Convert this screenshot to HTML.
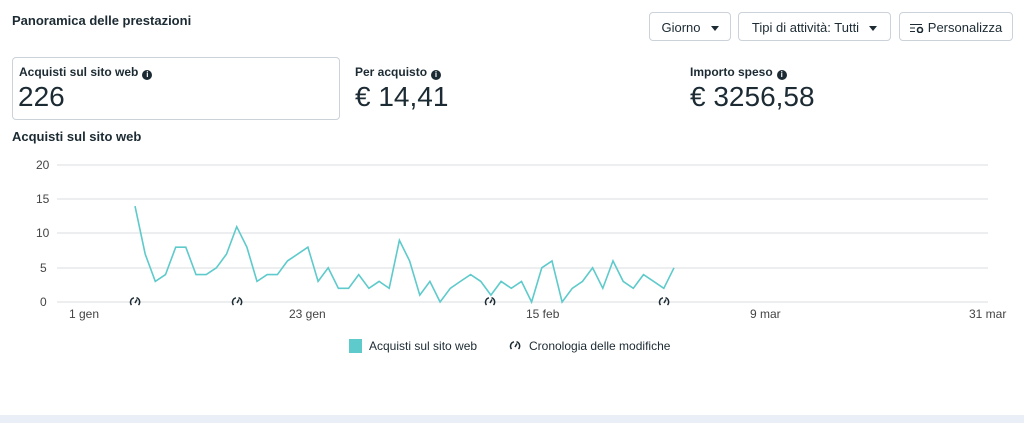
<!DOCTYPE html>
<html><head><meta charset="utf-8"><style>
body{margin:0;width:1024px;height:423px;background:#fff;font-family:"Liberation Sans",sans-serif;color:#1c2b33;position:relative;overflow:hidden}
.a{position:absolute}
.btn{position:absolute;top:12px;height:29px;border:1px solid #cbd2d9;border-radius:4px;font-size:13px;line-height:29px;box-sizing:border-box;text-align:center;background:#fff}
.tri{display:inline-block;width:0;height:0;border-left:4px solid transparent;border-right:4px solid transparent;border-top:5px solid #1c2b33;vertical-align:middle;margin-left:10px}
.lab{font-size:12px;font-weight:bold}
.val{font-size:28px}
.i{display:inline-block;width:10px;height:10px;border-radius:50%;background:#1c2b33;color:#fff;font-size:8px;line-height:10px;text-align:center;font-weight:bold;vertical-align:-1px;margin-left:4px}
.ax{font-size:12px;color:#444;position:absolute}
</style></head><body>
<div class="a" style="left:12px;top:13px;font-size:13px;font-weight:bold">Panoramica delle prestazioni</div>
<div class="btn" style="left:649px;width:82px">Giorno<span class="tri"></span></div>
<div class="btn" style="left:738px;width:153px">Tipi di attività: Tutti<span class="tri"></span></div>
<div class="btn" style="left:899px;width:114px"><svg width="14" height="10" style="vertical-align:-1px;margin-right:4px"><g stroke="#1c2b33" stroke-width="1"><line x1="0" y1="1.5" x2="12" y2="1.5"/><line x1="0" y1="5" x2="5" y2="5"/><line x1="0" y1="8.5" x2="5" y2="8.5"/></g><circle cx="10" cy="7" r="2.5" fill="none" stroke="#1c2b33" stroke-width="1.6"/></svg>Personalizza</div>
<div class="a" style="left:12px;top:57px;width:328px;height:63px;border:1px solid #cbd2d9;border-radius:4px;box-sizing:border-box"></div>
<div class="a lab" style="left:19px;top:65px">Acquisti sul sito web<span class="i">i</span></div>
<div class="a val" style="left:18px;top:81px">226</div>
<div class="a lab" style="left:355px;top:65px">Per acquisto<span class="i">i</span></div>
<div class="a val" style="left:355px;top:81px">€ 14,41</div>
<div class="a lab" style="left:690px;top:65px">Importo speso<span class="i">i</span></div>
<div class="a val" style="left:690px;top:81px">€ 3256,58</div>
<div class="a lab" style="left:12px;top:129px;font-size:13px">Acquisti sul sito web</div>
<div class="ax" style="left:36px;top:158px">20</div>
<div class="ax" style="left:36px;top:192px">15</div>
<div class="ax" style="left:36px;top:226px">10</div>
<div class="ax" style="left:40px;top:261px">5</div>
<div class="ax" style="left:40px;top:295px">0</div>
<div class="ax" style="left:69px;top:307px">1 gen</div>
<div class="ax" style="left:289px;top:307px">23 gen</div>
<div class="ax" style="left:526px;top:307px">15 feb</div>
<div class="ax" style="left:750px;top:307px">9 mar</div>
<div class="ax" style="left:969px;top:307px">31 mar</div>
<svg class="a" style="left:0;top:0" width="1024" height="423">
<defs><g id="g"><path d="M-3.5,3 A4.5,4.5 0 0 1 -1,-4.2 M1.5,-4.3 A4.5,4.5 0 0 1 3.5,3" fill="none" stroke="#1c2b33" stroke-width="1.5"/><line x1="0" y1="1" x2="2" y2="-2.5" stroke="#1c2b33" stroke-width="1.5"/></g></defs>
<g stroke="#e6e9ec" stroke-width="1.5">
<line x1="57" x2="988" y1="165" y2="165"/><line x1="57" x2="988" y1="199" y2="199"/><line x1="57" x2="988" y1="233" y2="233"/><line x1="57" x2="988" y1="268" y2="268"/><line x1="57" x2="988" y1="302" y2="302"/>
</g>
<polyline id="pl" fill="none" stroke="#5ecacb" stroke-width="1.6"/>
<use href="#g" x="135" y="302"/><use href="#g" x="237" y="302"/><use href="#g" x="490" y="302"/><use href="#g" x="664" y="302"/>
<rect x="349" y="339" width="13" height="14" fill="#5ecacb"/>
<text x="369" y="350" font-size="12" fill="#1c2b33">Acquisti sul sito web</text>
<use href="#g" x="515" y="346"/>
<text x="529" y="350" font-size="12" fill="#1c2b33">Cronologia delle modifiche</text>
</svg>
<div class="a" style="left:0;top:415px;width:1024px;height:8px;background:#e9eef7"></div>
<script>
var v=[14,7,3,4,8,8,4,4,5,7,11,8,3,4,4,6,7,8,3,5,2,2,4,2,3,2,9,6,1,3,0,2,3,4,3,1,3,2,3,0,5,6,0,2,3,5,2,6,3,2,4,3,2,5];
var p=v.map(function(y,i){return (135+i*539/53).toFixed(1)+","+(302-y*6.85).toFixed(1)}).join(" ");
document.getElementById("pl").setAttribute("points",p);
</script>
</body></html>
